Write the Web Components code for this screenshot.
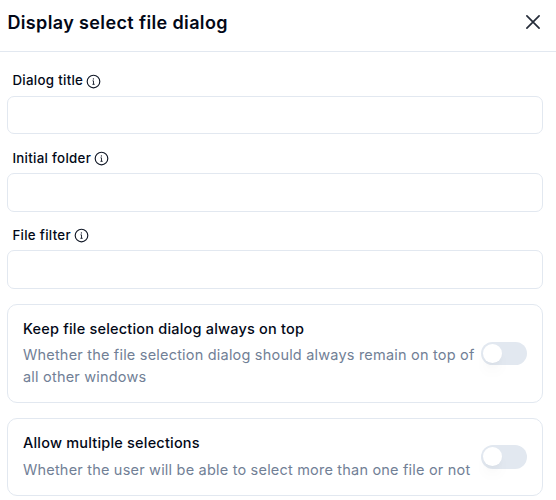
<!DOCTYPE html>
<html lang="en">
<head>
<meta charset="utf-8">
<title>Display select file dialog</title>
<style>
body{margin:0;background:#fff;font-family:Inter,sans-serif;color:#020817;height:500px;overflow:hidden}
</style>
</head>
<body>
<file-dialog-panel heading="Display select file dialog">
<text-field label="Dialog title" style="--box:38px;--lift:-2px;--icon-top:3px"></text-field>
<text-field label="Initial folder"></text-field>
<text-field label="File filter"></text-field>
<switch-card label="Keep file selection dialog always on top" style="--h:99px">Whether the file selection dialog should always remain on top of all other windows</switch-card>
<switch-card label="Allow multiple selections" style="--h:78px;--gap:5px;--track:24px">Whether the user will be able to select more than one file or not</switch-card>
</file-dialog-panel>
<script>
class FileDialogPanel extends HTMLElement{
  constructor(){
    super();
    this.attachShadow({mode:'open'}).innerHTML=`<style>
:host{display:block}
header{display:flex;box-sizing:border-box;height:52px;padding:0 14px 6px 7.4px;align-items:center;justify-content:space-between;border-bottom:1px solid #e2e8f0}
h1{margin:0;font-size:18px;line-height:28px;font-weight:600;letter-spacing:.37px;white-space:nowrap}
svg{display:block;width:18px;height:18px;margin-bottom:1px}
main{padding:19px 13px 0 7px}
</style><header><h1></h1><svg viewBox="0 0 18 18" fill="none" stroke="#252c39" stroke-width="1.7" stroke-linecap="round"><path d="M2.9 2.9 15.1 15.1M15.1 2.9 2.9 15.1"/></svg></header><main><slot></slot></main>`;
    this.shadowRoot.querySelector('h1').textContent=this.getAttribute('heading');
  }
}
class TextField extends HTMLElement{
  constructor(){
    super();
    this.attachShadow({mode:'open'}).innerHTML=`<style>
:host{display:block;height:77.2px}
.label{display:flex;align-items:center;gap:3px;box-sizing:border-box;height:calc(20px + var(--lift,0px));padding-left:5.4px;margin-bottom:calc(5px - var(--lift,0px));font-size:13.3px;font-weight:500;letter-spacing:.3px;white-space:nowrap}
span{line-height:18px}
svg{width:15px;height:15px;margin-top:var(--icon-top,1px);flex:none}
.box{box-sizing:border-box;height:var(--box,39px);border:1px solid #e2e8f0;border-radius:7px;background:#fff}
</style><div class="label"><span></span><svg viewBox="0 0 15 15" fill="none" stroke="#111827" stroke-width="1.15"><circle cx="7.5" cy="7.5" r="6.3"/><path d="M6.5 6.8h1v3.5M6.4 10.3h2.3" stroke-width=".9"/><circle cx="7.4" cy="4.9" r=".65" fill="#111827" stroke="none"/></svg></div><div class="box"></div>`;
    this.shadowRoot.querySelector('span').textContent=this.getAttribute('label');
  }
}
class ToggleSwitch extends HTMLElement{
  constructor(){
    super();
    this.attachShadow({mode:'open'}).innerHTML=`<style>
:host{display:flex;align-items:center;box-sizing:border-box;width:46px;height:var(--track,23px);padding:0 2px;border-radius:12px;background:#e2e8f0;flex:none}
i{display:block;width:19px;height:19px;border-radius:50%;background:#fff;box-shadow:0 10px 15px -3px #0000000d,0 4px 6px -2px #00000008}
</style><i></i>`;
  }
}
class SwitchCard extends HTMLElement{
  constructor(){
    super();
    this.attachShadow({mode:'open'}).innerHTML=`<style>
:host{display:flex;box-sizing:border-box;height:var(--h);border:1px solid #e2e8f0;border-radius:10px;padding:0 15px;align-items:center;justify-content:space-between;margin:1.4px 0 15px}
.copy{width:456px}
.title{font-size:14.5px;line-height:22px;font-weight:500;letter-spacing:.2px;margin-bottom:var(--gap,4px)}
.text{font-size:14.5px;line-height:22px;letter-spacing:.2px;color:#718096}
</style><div class="copy"><div class="title"></div><div class="text"><slot></slot></div></div><toggle-switch></toggle-switch>`;
    this.shadowRoot.querySelector('.title').textContent=this.getAttribute('label');
  }
}
customElements.define('file-dialog-panel',FileDialogPanel);
customElements.define('text-field',TextField);
customElements.define('toggle-switch',ToggleSwitch);
customElements.define('switch-card',SwitchCard);
</script>
</body>
</html>
